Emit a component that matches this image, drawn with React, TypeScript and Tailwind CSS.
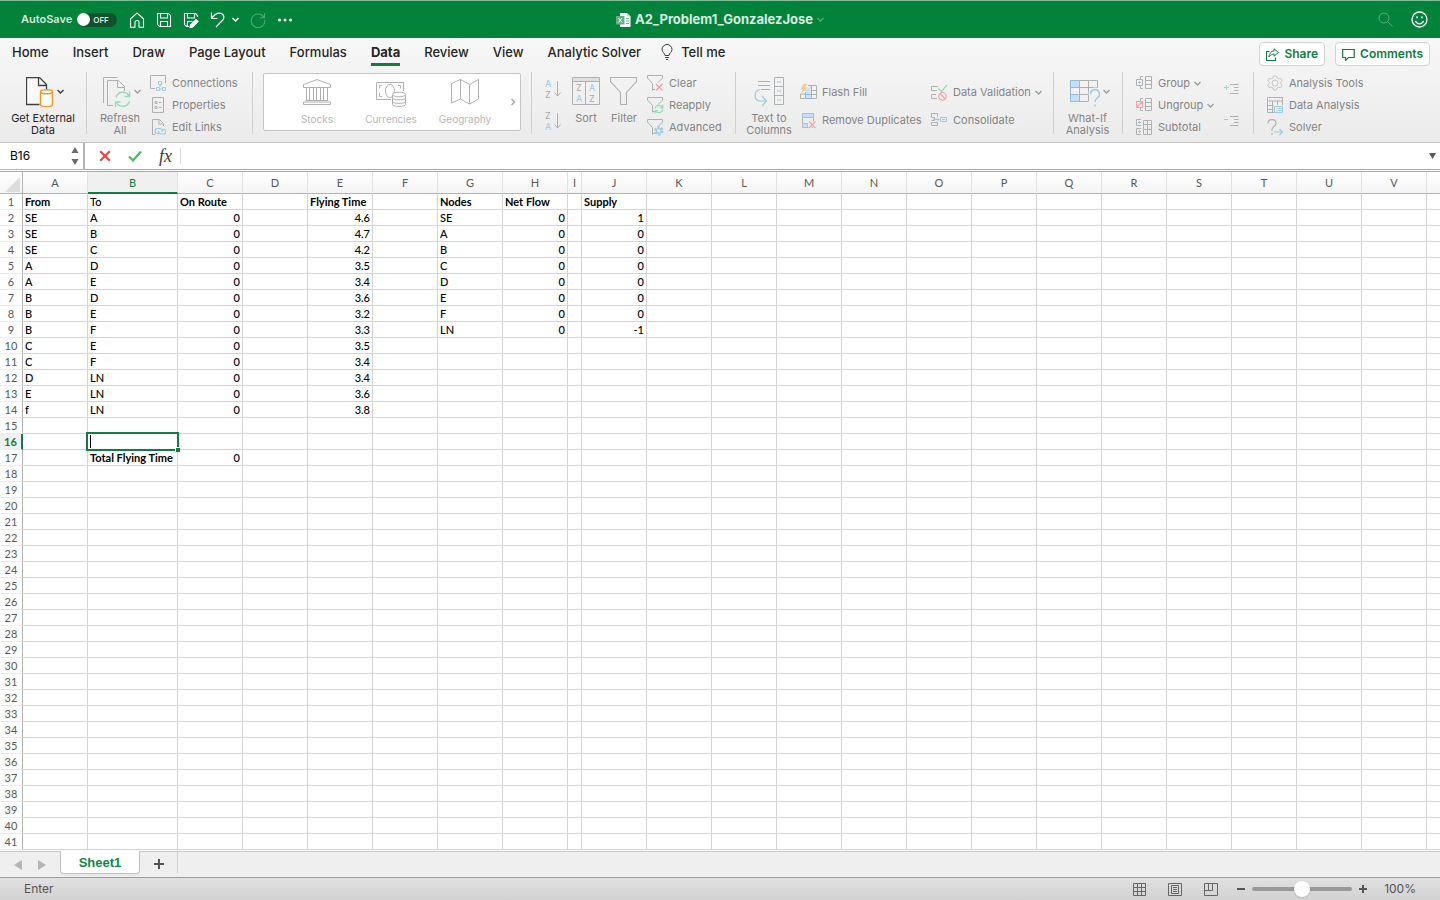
import { useState, type ReactNode } from "react";
import { clsx } from "clsx";

const GRAY = "#b0b0b0";
const BLUE = "#98cbe8";
const GREEN = "#96dcb4";
const RED = "#f7a0a0";

type IconProps = {
  w: number;
  h: number;
  color?: string;
  children: ReactNode;
};

function Icon({ w, h, color = GRAY, children }: IconProps) {
  return (
    <svg
      width={w}
      height={h}
      viewBox={`0 0 ${w} ${h}`}
      fill="none"
      stroke={color}
      className="shrink-0"
      aria-hidden="true"
    >
      {children}
    </svg>
  );
}

function Chevron({ color = "#a0a0a0" }: { color?: string }) {
  return (
    <Icon w={7} h={5} color={color}>
      <path d="M.500 1l3 3 3-3" strokeWidth="1.500" />
    </Icon>
  );
}

/* ---------- Title bar icons ---------- */

const HomeIcon = () => (
  <Icon w={16} h={16} color="#fff">
    <path d="M1.500 6.800L8 1l6.500 5.800V15.300H10V10.500a2 2 0 0 0-4 0v4.800H1.500z" strokeWidth="1.100" />
  </Icon>
);

const SaveIcon = () => (
  <Icon w={16} h={16} color="#fff">
    <path d="M1.500 1.500h11l2 2v11h-11l-2-2z M4.500 1.500v4.500h7V1.500 M4.500 14.500V9.500h7v5" strokeWidth="1.100" />
  </Icon>
);

const SaveAsIcon = () => (
  <Icon w={16} h={16} color="#fff">
    <path d="M14.500 5V3.500l-2-2h-11v11l2 2H6 M4.500 1.500v4.500h7V1.500 M4.500 14.500V9.500h5" strokeWidth="1.100" />
    <path d="M7.500 12.800l5.500-5.500 2.300 2.300-5.500 5.500-3 .700z" fill="#fff" />
  </Icon>
);

const UndoIcon = () => (
  <Icon w={15} h={17} color="#fff">
    <path d="M1.500 1.500v6h6 M1.800 7.200C4 4 6.500 2.200 9.500 2.200c4 0 5.500 4 3.300 6.800L6 16" strokeWidth="1.200" />
  </Icon>
);

const RedoIcon = () => (
  <Icon w={16} h={16} color="#4fa974">
    <path d="M14 5.500A6.800 6.800 0 1 0 14.800 8 M14.500 1v4.700H10" strokeWidth="1.100" />
  </Icon>
);

const ExcelFileIcon = () => (
  <Icon w={15} h={16} color="none">
    <path d="M4 1h7l3.500 3.500V15H4z" fill="#fff" />
    <path d="M11 1v3.500h3.500" fill="#b9dcc8" />
    <path d="M10 6.500h3M10 9h3M10 11.500h3" stroke="#5cb488" />
    <rect y="4" width="8.500" height="8.500" fill="#5fae84" />
    <path d="M2.500 6l3.500 4.500M6 6l-3.500 4.500" stroke="#fff" />
  </Icon>
);

/* ---------- Ribbon icons ---------- */

const GetDataIcon = () => (
  <Icon w={28} h={30} color="#404040">
    <path d="M13.500 27.500H.500V.500h13l7 7V12 M12.500.500v8h8" fill="#fafafa" strokeWidth="1.300" />
    <path d="M14.500 15v12.500c0 3 12 3 12 0V15" fill="#fafafa" stroke="#f7941d" strokeWidth="1.400" />
    <ellipse cx="20.500" cy="14.800" rx="6" ry="2" fill="#fafafa" stroke="#f7941d" strokeWidth="1.400" />
  </Icon>
);

const RefreshIcon = () => (
  <Icon w={28} h={30}>
    <path d="M.500 26V.500h14 M10 28.500H4.500v-25h11l6 6V14 M14.500 3.500v7h7" />
    <path d="M13 20.500a7 7 0 0 1 13-1.500 M26.500 14.500V19.500h-5 M26.500 24a7 7 0 0 1-13 1.500 M12.500 30v-5h5" stroke={GREEN} strokeWidth="1.400" />
  </Icon>
);

const ConnectionsIcon = () => (
  <Icon w={16} h={16}>
    <path d="M5 13.500H.500V.500h15V8" />
    <path d="M8.500 6.500h3v3h-3z M6.500 12.500h3v3h-3z M12.500 12.500h3v3h-3z M10 9.500v2.500 M9.500 14h3" stroke={BLUE} />
  </Icon>
);

const PropertiesIcon = () => (
  <Icon w={16} h={16}>
    <path d="M2.500.500h11v15h-11z M5 4.500h2v2H5z M5 9.500h2v2H5z M9 5.500h2.500M9 10.500h2.500" />
  </Icon>
);

const EditLinksIcon = () => (
  <Icon w={16} h={16}>
    <path d="M5 15.500H2.500V.500h7l4 4V7 M9 .500v4.500h4.500" />
    <path d="M9 14.500H7.500a2.500 2.500 0 0 1 0-5H10a2.500 2.500 0 0 1 2 3.500 M12.500 10.500h1a2 2 0 0 1 0 4.500H11a2 2 0 0 1-2-3" stroke={BLUE} strokeWidth="1.200" />
  </Icon>
);

const StocksIcon = () => (
  <Icon w={28} h={26}>
    <path d="M.500 8.500v-3L14 .600l13.500 4.900v3z M2.500 21.500h23 M.500 25.500v-2.500h27v2.500z M3.500 8.500v13M6.500 8.500v13M10.500 8.500v13M13.500 8.500v13M17.500 8.500v13M20.500 8.500v13M24.500 8.500v13" />
  </Icon>
);

const CurrenciesIcon = () => (
  <Icon w={31} h={28}>
    <path d="M15 20.500H.500V3.500h27V12 M6 6.500H3.500v3 M3.500 14v3.500H6 M22 6.500h2.500v3" />
    <ellipse cx="14" cy="12" rx="4.500" ry="6.500" />
    <path d="M16.500 16v9.500c0 2.500 13 2.500 13 0V16" fill="#fff" />
    <ellipse cx="23" cy="15.500" rx="6.500" ry="2.300" fill="#fff" />
    <path d="M16.500 19c0 2.500 13 2.500 13 0M16.500 22.500c0 2.500 13 2.500 13 0" />
  </Icon>
);

const GeographyIcon = () => (
  <Icon w={28} h={26}>
    <path d="M.500 4.500l9-4 9 5 9-5v19.500l-9 5-9-5-9 4z M9.500.500V20M18.500 5.500V25" />
  </Icon>
);

const SortIcon = ({ top, bottom }: { top: string; bottom: string }) => (
  <Icon w={18} h={20}>
    <g stroke="none" fontSize="9" fontFamily="Inter, sans-serif">
      <text x="1" y="8" fill={top === "A" ? BLUE : "#a8a8a8"}>{top}</text>
      <text x="1" y="19" fill={bottom === "A" ? BLUE : "#a8a8a8"}>{bottom}</text>
    </g>
    <path d="M13.500 2v15 M10.500 13.500l3 3.500 3-3.500" />
  </Icon>
);

const SortDialogIcon = () => (
  <Icon w={28} h={28}>
    <path d="M1 1h26v3H1z" fill="#dedede" stroke="none" />
    <path d="M.500.500h27v27H.500z M.500 4.500h27 M13.500 4.500v23" />
    <g stroke="none" fontSize="9" fontFamily="Inter, sans-serif">
      <text x="4" y="14" fill="#a8a8a8">Z</text>
      <text x="4" y="25" fill={BLUE}>A</text>
      <text x="17" y="14" fill={BLUE}>A</text>
      <text x="17" y="25" fill="#a8a8a8">Z</text>
    </g>
  </Icon>
);

const FilterIcon = () => (
  <Icon w={28} h={28}>
    <path d="M.500.500h26v4l-10 11v12h-6v-12l-10-11z" strokeWidth="1.100" />
  </Icon>
);

const SmallFilter = ({ children }: { children: ReactNode }) => (
  <Icon w={17} h={17}>
    <path d="M5.500 15.500V8.500l-5-5.500V.500h15V3l-4.500 4.500 M5.500 14.500h2.500" />
    {children}
  </Icon>
);

const TextToColumnsIcon = () => (
  <Icon w={30} h={30}>
    <path d="M4 4.500h12M4 8.500h12M7 12.500h9" />
    <path d="M20.500.500h9v27h-9z M20.500 9.500h9M20.500 18.500h9" />
    <path d="M6 12.500c-6 1-7 10.500 0 11.500h6 M8 19l4.500 5-4.500 5 M23 5h4M23 14h4M23 23h4" stroke={BLUE} strokeWidth="1.200" />
  </Icon>
);

const FlashFillIcon = () => (
  <Icon w={17} h={16}>
    <path d="M8 1.500h8.500v13H.500V10H5 M11.500 1.500v13 M5.500 6.500h11 M5.500 10.500h11 M5.500 10v4.500" />
    <path d="M6 6l5-4v12.500H6z" fill="#cde2f5" stroke="none" />
    <path d="M6 10.500h5.500M5.500 8v6.500h6v-13" stroke="#8fb8dd" />
    <path d="M3.500 0h3.500L5 3.500h3L.500 10 3 5.500H.500z" fill="#f7c98f" stroke="none" />
  </Icon>
);

const RemoveDuplicatesIcon = () => (
  <Icon w={17} h={17}>
    <path d="M2.500 1.500h11v14h-11z" />
    <path d="M2.500 1.500h11v4h-11zM2.500 11.500h5v4h-5z" fill="#c5dff6" stroke="#9cc2e4" />
    <path d="M9 9.500l6.500 6.500M15.500 9.500L9 16" stroke="#f0f0f0" strokeWidth="3" />
    <path d="M9 9.500l6.500 6.500M15.500 9.500L9 16" stroke={RED} strokeWidth="1.300" />
  </Icon>
);

const DataValidationIcon = () => (
  <Icon w={17} h={17}>
    <path d="M7 2.500H.500v4H6 M5 10.500H.500v4H6" />
    <path d="M7.500 4.500l3 3L16 1" stroke={GREEN} strokeWidth="1.300" />
    <circle cx="11.500" cy="12.300" r="3.800" stroke={RED} strokeWidth="1.200" />
    <path d="M9 9.700l5 5" stroke={RED} strokeWidth="1.200" />
  </Icon>
);

const ConsolidateIcon = () => (
  <Icon w={17} h={16}>
    <path d="M.500 5V1.500h6v3 M.500 10.500h6v3h-6z M.500 5.500h3v3h-3" />
    <path d="M2 7.500h6 M6 5.500l2 2-2 2 M9.500 5.500h6v4h-6z M11 7.500h3" stroke={BLUE} />
  </Icon>
);

const WhatIfIcon = () => (
  <Icon w={30} h={30}>
    <path d="M1 4h9v7H1zM1 18h9v7H1z" fill="#c5dff6" stroke="none" />
    <path d="M10 3.500h17.500V12 M10 10.500h17.500 M18.500 3.500v21 M.500 17.500H19 M.500 24.500H18" />
    <path d="M.500 3.500h9v21h-9zM.500 10.500h9M.500 17.500h9" stroke="#93b9dd" />
    <path d="M20.500 17.500a4.500 4.500 0 1 1 7 3.300c-1.500 1-2.500 1.700-2.500 4.200 M25 27.500v2" stroke="#f1f1f1" strokeWidth="4" />
    <path d="M20.500 17.500a4.500 4.500 0 1 1 7 3.300c-1.500 1-2.500 1.700-2.500 4.200 M25 27.500v2" stroke={BLUE} strokeWidth="1.500" />
  </Icon>
);

const GroupIcon = () => (
  <Icon w={17} h={16}>
    <path d="M9.500 1.500h6v12h-6zM9.500 5.500h6M9.500 9.500h6 M.500 4.500h6v6h-6z M4.500 4V1.500H7 M4.500 11v2.500H7" />
    <path d="M2 7.500h3M3.500 6v3" stroke={BLUE} />
  </Icon>
);

const UngroupIcon = () => (
  <Icon w={17} h={16}>
    <path d="M9.500 1.500h6v12h-6zM9.500 5.500h6M9.500 9.500h6 M4.500 4V1.500H7 M4.500 11v2.500H7" />
    <path d="M.500 4.500h6v6h-6z M1 10l5-5" stroke={RED} strokeWidth="1.200" />
  </Icon>
);

const SubtotalIcon = () => (
  <Icon w={17} h={16}>
    <path d="M7.500 1.500h8v14h-8zM7.500 5.500h8M7.500 10.500h8M11.500 1.500v14 M5 .500H.500v6H5 M5 9.500H.500v6H5" />
    <path d="M2 3.500h3M3.500 2v3M2 12.500h3M3.500 11v3" stroke={BLUE} />
  </Icon>
);

const DetailIcon = ({ plus }: { plus: boolean }) => (
  <Icon w={15} h={12}>
    <path d="M6 1.500h8.500M10 4.500h4.500M10 7.500h4.500M6 10.500h8.500" />
    {plus ? <path d="M0 4.500h5M2.500 2v5" stroke={GREEN} /> : <path d="M0 4.500h4" stroke={RED} />}
  </Icon>
);

const GearIcon = () => (
  <Icon w={16} h={16} color="#c4c4c4">
    <path d="M6.500 1h3l.500 2 1.700.900 2-.700 1.500 2.600-1.500 1.400v1.600l1.500 1.400-1.500 2.600-2-.700-1.700.900-.500 2h-3L6 13l-1.700-.900-2 .700L.800 10.200l1.500-1.400V7.200L.800 5.800l1.500-2.600 2 .700L6 3z" />
    <circle cx="8" cy="8" r="3" />
  </Icon>
);

const DataAnalysisIcon = () => (
  <Icon w={17} h={16}>
    <path d="M7 15.500H.500v-15h15V8 M.500 4h15M.500 8.500h6M.500 12.500h6 M5.500 4v11.500 M10.500 4v4" />
    <path d="M7.500 9.500h8v6h-8z M9.500 11.500h1M11.500 11.500h3M9.500 13.500h1M11.500 13.500h3" stroke={BLUE} />
  </Icon>
);

const SolverIcon = () => (
  <Icon w={17} h={17}>
    <path d="M.800 4.500C1 2 3 .700 5 .700s4 1.300 4 3.800c0 3-4 3-4 6V12 M5 14v2" strokeWidth="1.200" />
    <path d="M7 13h8.500 M12.500 10l3 3-3 3" stroke={BLUE} strokeWidth="1.200" />
  </Icon>
);

/* ---------- Ribbon building blocks ---------- */

function RibbonGroup({ className, children }: { className?: string; children: ReactNode }) {
  return (
    <div className={clsx("flex h-[62px] shrink-0 border-r border-[#cfcfcf]", className)}>
      {children}
    </div>
  );
}

type BigButtonProps = {
  icon: ReactNode;
  lines: string[];
  width: string;
  chevron?: string;
  dark?: boolean;
};

function BigButton({ icon, lines, width, chevron, dark }: BigButtonProps) {
  return (
    <button
      className={clsx(
        "flex shrink-0 flex-col items-center pt-[5px] text-[11px] leading-3",
        width,
        dark ? "text-[#262626]" : "text-[#858585]"
      )}
    >
      <span className={clsx("mb-[5px] flex h-[30px] items-start gap-[3px]", chevron && "pl-1")}>
        {icon}
        {chevron && (
          <span className="flex h-7 items-center">
            <Chevron color={chevron} />
          </span>
        )}
      </span>
      {lines.map((line) => (
        <span key={line} className="whitespace-nowrap">
          {line}
        </span>
      ))}
    </button>
  );
}

type SmallButtonProps = { icon: ReactNode; label: string; chevron?: boolean; tall?: boolean };

function SmallButton({ icon, label, chevron, tall }: SmallButtonProps) {
  return (
    <button
      className={clsx(
        "flex items-center whitespace-nowrap text-[11px] text-[#858585]",
        tall ? "h-7" : "h-[22px]"
      )}
    >
      <span className="w-[22px]">{icon}</span>
      {label}
      {chevron && (
        <span className="ml-1">
          <Chevron />
        </span>
      )}
    </button>
  );
}

function Ribbon() {
  return (
    <div className="flex h-[70px] overflow-hidden">
      <RibbonGroup className="w-[87px]">
        <BigButton dark chevron="#404040" width="w-[86px]" icon={<GetDataIcon />} lines={["Get External", "Data"]} />
      </RibbonGroup>

      <RibbonGroup className="w-[166px] pl-[3px]">
        <BigButton chevron="#a0a0a0" width="w-[60px]" icon={<RefreshIcon />} lines={["Refresh", "All"]} />
        <div>
          <SmallButton icon={<ConnectionsIcon />} label="Connections" />
          <SmallButton icon={<PropertiesIcon />} label="Properties" />
          <SmallButton icon={<EditLinksIcon />} label="Edit Links" />
        </div>
      </RibbonGroup>

      <RibbonGroup className="w-[279px] pl-[10px]">
        <div className="mt-px flex h-[58px] w-[258px] rounded-xs border border-[#c6c6c6] bg-white pl-4 text-[#b8b8b8]">
          {[
            { label: "Stocks", icon: <StocksIcon /> },
            { label: "Currencies", icon: <CurrenciesIcon /> },
            { label: "Geography", icon: <GeographyIcon /> },
          ].map((item) => (
            <button key={item.label} className="flex w-[74px] flex-col items-center pt-[5px] text-[10px] leading-3">
              <span className="mb-2 h-[26px]">{item.icon}</span>
              {item.label}
            </button>
          ))}
          <button aria-label="More data types" className="pl-2">
            <Icon w={6} h={8} color="#a0a0a0">
              <path d="M1.500 1l3 3-3 3" strokeWidth="1.300" />
            </Icon>
          </button>
        </div>
      </RibbonGroup>

      <RibbonGroup className="w-[204px] pl-3">
        <div className="flex w-6 flex-col gap-3 pt-[7px]">
          <button aria-label="Sort A to Z"><SortIcon top="A" bottom="Z" /></button>
          <button aria-label="Sort Z to A"><SortIcon top="Z" bottom="A" /></button>
        </div>
        <BigButton width="w-9" icon={<SortDialogIcon />} lines={["Sort"]} />
        <BigButton width="w-10" icon={<FilterIcon />} lines={["Filter"]} />
        <div className="pl-[3px]">
          <SmallButton
            label="Clear"
            icon={<SmallFilter><path d="M9 9l6.500 6.500M15.500 9L9 15.500" stroke={RED} strokeWidth="1.300" /></SmallFilter>}
          />
          <SmallButton
            label="Reapply"
            icon={
              <SmallFilter>
                <path d="M8 11.500a4 4 0 0 1 7.500-1 M15.800 7.500v3.500h-3 M15.800 12.500a4 4 0 0 1-7.500 1 M8 16.500v-3h3" stroke={GREEN} strokeWidth="1.200" />
              </SmallFilter>
            }
          />
          <SmallButton
            label="Advanced"
            icon={
              <SmallFilter>
                <circle cx="11.800" cy="11.800" r="3.700" stroke={BLUE} strokeWidth="2" strokeDasharray="2.300 1.570" />
                <circle cx="11.800" cy="11.800" r="2.300" stroke={BLUE} strokeWidth="1.200" />
              </SmallFilter>
            }
          />
        </div>
      </RibbonGroup>

      <RibbonGroup className="w-[318px] pl-[2px]">
        <BigButton width="w-[62px]" icon={<TextToColumnsIcon />} lines={["Text to", "Columns"]} />
        <div className="w-[131px] pt-[6px]">
          <SmallButton tall icon={<FlashFillIcon />} label="Flash Fill" />
          <SmallButton tall icon={<RemoveDuplicatesIcon />} label="Remove Duplicates" />
        </div>
        <div className="pt-[6px]">
          <SmallButton tall chevron icon={<DataValidationIcon />} label="Data Validation" />
          <SmallButton tall icon={<ConsolidateIcon />} label="Consolidate" />
        </div>
      </RibbonGroup>

      <RibbonGroup className="w-[69px]">
        <BigButton chevron="#a0a0a0" width="w-[67px]" icon={<WhatIfIcon />} lines={["What-If", "Analysis"]} />
      </RibbonGroup>

      <RibbonGroup className="w-[131px] pl-[13px]">
        <div className="w-[88px]">
          <SmallButton chevron icon={<GroupIcon />} label="Group" />
          <SmallButton chevron icon={<UngroupIcon />} label="Ungroup" />
          <SmallButton icon={<SubtotalIcon />} label="Subtotal" />
        </div>
        <div className="flex flex-col gap-5 pt-[11px]">
          <button aria-label="Show Detail"><DetailIcon plus /></button>
          <button aria-label="Hide Detail"><DetailIcon plus={false} /></button>
        </div>
      </RibbonGroup>

      <div className="pl-[13px]">
        <SmallButton icon={<GearIcon />} label="Analysis Tools" />
        <SmallButton icon={<DataAnalysisIcon />} label="Data Analysis" />
        <SmallButton icon={<SolverIcon />} label="Solver" />
      </div>
    </div>
  );
}

/* ---------- Header ---------- */

function TitleBar() {
  const [autoSave, setAutoSave] = useState(false);

  return (
    <header className="grid h-[38px] shrink-0 grid-cols-[1fr_auto_1fr] items-center border-t border-[#7fbf9a] bg-[#03823b] text-white">
      <div className="flex items-center pl-[21px]">
        <span className="text-[11px] font-semibold text-[#d3ebdc]">AutoSave</span>
        <button
          role="switch"
          aria-checked={autoSave}
          aria-label="AutoSave"
          onClick={() => setAutoSave(!autoSave)}
          className="ml-[5px] flex h-[14px] w-10 items-center rounded-full bg-[#10522e] text-[8px] font-semibold text-[#d8e8de]"
        >
          <span className="mr-[3px] h-[13px] w-[13px] rounded-full bg-white" />
          {autoSave ? "ON" : "OFF"}
        </button>
        <div className="ml-3 flex items-center gap-[11px]">
          <button aria-label="Home"><HomeIcon /></button>
          <button aria-label="Save"><SaveIcon /></button>
          <button aria-label="Save As"><SaveAsIcon /></button>
          <button aria-label="Undo" className="flex items-center gap-[7px]">
            <UndoIcon />
            <Chevron color="#fff" />
          </button>
          <button aria-label="Redo"><RedoIcon /></button>
          <button aria-label="More commands">
            <Icon w={16} h={4} color="none">
              <circle cx="2.500" cy="2" r="1.500" fill="#fff" />
              <circle cx="8" cy="2" r="1.500" fill="#fff" />
              <circle cx="13.500" cy="2" r="1.500" fill="#fff" />
            </Icon>
          </button>
        </div>
      </div>
      <h1 className="flex items-center text-[13px] font-bold text-[#d9eee1]">
        <ExcelFileIcon />
        <span className="ml-1 mr-1">A2_Problem1_GonzalezJose</span>
        <Chevron color="#4fa974" />
      </h1>
      <div className="flex items-center justify-end gap-[18px] pr-3">
        <button aria-label="Search">
          <Icon w={15} h={15} color="#58ad7c">
            <circle cx="6" cy="6" r="5" />
            <path d="M9.500 9.500L14.500 14.500" />
          </Icon>
        </button>
        <button aria-label="Feedback">
          <Icon w={17} h={17} color="#fff">
            <circle cx="8.500" cy="8.500" r="7.500" strokeWidth="1.300" />
            <path d="M4.500 10c1.500 3.700 6.500 3.700 8 0" strokeWidth="1.200" />
            <path d="M5.200 5.500h1.800v1.800H5.200zM10 5.500h1.800v1.800H10z" fill="#fff" stroke="none" />
          </Icon>
        </button>
      </div>
    </header>
  );
}

const TABS = ["Home", "Insert", "Draw", "Page Layout", "Formulas", "Data", "Review", "View", "Analytic Solver"];

function TabBar() {
  const [active, setActive] = useState("Data");

  return (
    <div className="flex h-[34px] items-start justify-between pl-3 pr-[10px] text-[13px] text-[#262626]">
      <nav className="flex gap-6">
        {TABS.map((tab) => (
          <button
            key={tab}
            onClick={() => setActive(tab)}
            className={clsx(
              "whitespace-nowrap border-b-[3px] pt-[3px] leading-[22px]",
              tab === active ? "border-[#107c41] font-bold" : "border-transparent font-medium"
            )}
          >
            {tab}
          </button>
        ))}
        <button className="-ml-1 flex items-center gap-2 border-b-[3px] border-transparent pt-[3px] font-medium leading-[22px]">
          <Icon w={12} h={16} color="#404040">
            <path d="M4 11.500C4 9 1 8.500 1 5.500a5 5 0 0 1 10 0c0 3-3 3.500-3 6z M4 13.500h4 M5 15.500h2" />
          </Icon>
          Tell me
        </button>
      </nav>
      <div className="flex gap-[10px] pt-1 text-[12px] font-semibold text-[#107c41]">
        <button className="flex h-6 items-center gap-[5px] rounded-sm border border-[#d4d4d4] bg-white px-[6px]">
          <Icon w={13} h={13} color="#107c41">
            <path d="M3.500 3.500h-3v9h9v-3" strokeWidth="1.100" />
            <path d="M8 .800l4.500 3.700L8 8.200V6C6 6 4.500 7 3 9c.500-3.500 2-6 5-6z" />
          </Icon>
          Share
        </button>
        <button className="flex h-6 items-center gap-[5px] rounded-sm border border-[#d4d4d4] bg-white px-[6px]">
          <Icon w={13} h={13} color="#107c41">
            <path d="M.700 1.500h11.500v8H6.500l-3 3v-3H.700z" strokeWidth="1.200" />
          </Icon>
          Comments
        </button>
      </div>
    </div>
  );
}

function FormulaBar() {
  return (
    <div className="flex h-[29px] shrink-0 items-stretch border-t border-[#c4c4c4] bg-white pb-px">
      <div className="flex w-[85px] items-center border-b border-r-2 border-[#b4b4b4] pr-1">
        <input
          aria-label="Name box"
          defaultValue="B16"
          className="w-0 flex-1 bg-transparent pl-[10px] text-[12px] text-black outline-none"
        />
        <button aria-label="Names">
          <Icon w={8} h={18} color="none">
            <path d="M4 0l3.500 6h-7zM4 18l3.500-6h-7z" fill="#6b6b6b" />
          </Icon>
        </button>
      </div>
      <div className="flex flex-1 items-center border-b border-[#a6a6a6]">
        <button aria-label="Cancel" className="ml-[14px]">
          <Icon w={12} h={12} color="#ef4444">
            <path d="M1.200 1.200l9.600 9.600M10.800 1.200L1.200 10.800" strokeWidth="2.200" />
          </Icon>
        </button>
        <button aria-label="Enter" className="ml-[17px]">
          <Icon w={14} h={12} color="#4bbf57">
            <path d="M1 6.500l4 4L13 1.500" strokeWidth="2.200" />
          </Icon>
        </button>
        <button
          aria-label="Insert function"
          className="ml-[17px] font-['Liberation_Serif',serif] text-[18px] italic leading-5 text-[#404040]"
        >
          fx
        </button>
        <input
          aria-label="Formula"
          className="ml-2 h-4 flex-1 border-l border-[#d8d8d8] px-2 text-[12px] outline-none"
        />
        <button aria-label="Expand formula bar" className="mr-1">
          <Icon w={7} h={6} color="none">
            <path d="M0 0h7L3.500 6z" fill="#595959" />
          </Icon>
        </button>
      </div>
    </div>
  );
}

/* ---------- Worksheet ---------- */

const COLUMNS = "ABCDEFGHIJKLMNOPQRSTUV".split("");
const ROW_COUNT = 41;
const SELECTED = { col: "B", row: 16 };

const ROUTES: [string, string, string][] = [
  ["SE", "A", "4.6"],
  ["SE", "B", "4.7"],
  ["SE", "C", "4.2"],
  ["A", "D", "3.5"],
  ["A", "E", "3.4"],
  ["B", "D", "3.6"],
  ["B", "E", "3.2"],
  ["B", "F", "3.3"],
  ["C", "E", "3.5"],
  ["C", "F", "3.4"],
  ["D", "LN", "3.4"],
  ["E", "LN", "3.6"],
  ["f", "LN", "3.8"],
];

const NODES: [string, string][] = [
  ["SE", "1"],
  ["A", "0"],
  ["B", "0"],
  ["C", "0"],
  ["D", "0"],
  ["E", "0"],
  ["F", "0"],
  ["LN", "-1"],
];

const cells: Record<string, string> = {
  A1: "From",
  B1: "To",
  C1: "On Route",
  E1: "Flying Time",
  G1: "Nodes",
  H1: "Net Flow",
  J1: "Supply",
  B17: "Total Flying Time",
  C17: "0",
};

ROUTES.forEach(([from, to, time], i) => {
  const row = i + 2;
  cells[`A${row}`] = from;
  cells[`B${row}`] = to;
  cells[`C${row}`] = "0";
  cells[`E${row}`] = time;
});

NODES.forEach(([node, supply], i) => {
  const row = i + 2;
  cells[`G${row}`] = node;
  cells[`H${row}`] = "0";
  cells[`J${row}`] = supply;
});

const BOLD = ["A1", "C1", "E1", "G1", "H1", "J1", "B17"];

function columnWidth(col: string) {
  if (col === "B") return "w-[90px]";
  if (col === "I") return "w-[14px]";
  return "w-[65px]";
}

function Cell({ id, selected }: { id: string; selected: boolean }) {
  const value = cells[id] ?? "";
  const numeric = value !== "" && !isNaN(Number(value));

  return (
    <td
      className={clsx(
        "relative h-4 whitespace-nowrap border-b border-r border-[#d4d4d4] p-0 px-[2px]",
        numeric && "text-right",
        BOLD.includes(id) ? "font-bold" : "font-medium"
      )}
    >
      {value}
      {selected && (
        <div className="absolute -inset-0.5 z-10 border-2 border-[#107c41] bg-white">
          <input aria-label={id} className="block h-full w-full bg-transparent outline-none" />
          <span className="absolute inset-y-px left-0.5 w-px bg-black" />
          <span className="absolute -bottom-[3px] -right-[3px] h-[5px] w-[5px] border-l border-t border-white bg-[#107c41]" />
        </div>
      )}
    </td>
  );
}

function Sheet() {
  return (
    <main className="min-h-0 flex-1 overflow-hidden border-t border-[#a6a6a6] bg-white">
      <table className="w-full table-fixed border-separate border-spacing-0 font-[Lato,sans-serif] text-[11px] leading-[15px] text-black">
        <colgroup>
          <col className="w-[23px]" />
          {COLUMNS.map((col) => (
            <col key={col} className={columnWidth(col)} />
          ))}
          <col />
        </colgroup>
        <thead>
          <tr className="bg-linear-to-b from-white to-[#f4f4f4] text-[#595959]">
            <th className="h-[22px] border-b border-r border-[#b4b4b4] p-0">
              <Icon w={20} h={18} color="none">
                <path d="M20 3v15H5z" fill="#dcdcdc" />
              </Icon>
            </th>
            {COLUMNS.map((col) => (
              <th
                key={col}
                scope="col"
                className={clsx(
                  "border-r border-r-[#e2e2e2] p-0 font-normal",
                  col === SELECTED.col
                    ? "border-b-2 border-b-[#107c41] bg-[#f0f0f0] font-bold text-[#107c41]"
                    : "border-b border-b-[#b4b4b4]"
                )}
              >
                {col}
              </th>
            ))}
            <th className="border-b border-[#b4b4b4] p-0" />
          </tr>
        </thead>
        <tbody>
          {Array.from({ length: ROW_COUNT }, (_, i) => i + 1).map((row) => (
            <tr key={row}>
              <th
                scope="row"
                className={clsx(
                  "h-4 border-b border-b-[#ececec] p-0 text-center",
                  row === SELECTED.row
                    ? "border-r-2 border-r-[#107c41] bg-[#f0f0f0] font-bold text-[#107c41]"
                    : "border-r border-r-[#b4b4b4] font-normal text-[#595959]"
                )}
              >
                {row}
              </th>
              {COLUMNS.map((col) => (
                <Cell key={col} id={`${col}${row}`} selected={col === SELECTED.col && row === SELECTED.row} />
              ))}
              <td className="border-b border-[#d4d4d4] p-0" />
            </tr>
          ))}
        </tbody>
      </table>
    </main>
  );
}

/* ---------- Footer ---------- */

function SheetTabs() {
  return (
    <div className="flex h-[26px] shrink-0 items-start border-t border-[#c8c8c8] bg-[#efefef]">
      <button aria-label="Previous sheet" className="ml-[14px] mt-2">
        <Icon w={8} h={10} color="none"><path d="M8 0v10L0 5z" fill="#b4b4b4" /></Icon>
      </button>
      <button aria-label="Next sheet" className="ml-4 mt-2">
        <Icon w={8} h={10} color="none"><path d="M0 0v10l8-5z" fill="#b4b4b4" /></Icon>
      </button>
      <button className="-mt-px ml-[14px] h-[23px] w-20 rounded-b-sm border border-t-0 border-[#c4c4c4] bg-white pt-px font-['Liberation_Sans',sans-serif] text-[13px] font-bold leading-[22px] text-[#0a8a48] shadow-xs">
        Sheet1
      </button>
      <div className="flex h-[21px] w-[38px] items-center justify-center border-r border-[#cfcfcf] pt-[3px]">
        <button aria-label="Add sheet">
          <Icon w={10} h={10} color="#555">
            <path d="M5 0v10M0 5h10" strokeWidth="2" />
          </Icon>
        </button>
      </div>
    </div>
  );
}

function StatusBar() {
  const [zoom, setZoom] = useState(100);

  return (
    <footer className="flex h-[23px] shrink-0 items-center justify-between border-t border-[#9c9c9c] bg-linear-to-b from-[#e0e0e0] to-[#d2d2d2] pl-6 pr-6 text-[12px] text-[#555]">
      <span>Enter</span>
      <div className="flex items-center">
        <button aria-label="Normal view">
          <Icon w={13} h={13} color="#666">
            <path d="M.500.500h12v12H.500zM4.500.500v12M8.500.500v12M.500 4.500h12M.500 8.500h12" />
          </Icon>
        </button>
        <button aria-label="Page layout view" className="ml-[22px]">
          <Icon w={14} h={13} color="#666">
            <path d="M.500.500h13v12H.500zM3.500 2.500h7v8h-7zM5 4.500h4M5 6.500h4M5 8.500h4" />
          </Icon>
        </button>
        <button aria-label="Page break view" className="ml-[22px]">
          <Icon w={14} h={13} color="#666">
            <path d="M.500.500h13v12H.500zM4.500.500v7M8.500.500v7M.500 7.500h8" />
          </Icon>
        </button>
        <button aria-label="Zoom out" className="ml-[19px]">
          <Icon w={8} h={8} color="#555"><path d="M0 4h8" strokeWidth="2" /></Icon>
        </button>
        <input
          type="range"
          aria-label="Zoom"
          min={0}
          max={200}
          value={zoom}
          onChange={(e) => setZoom(Number(e.target.value))}
          className="mx-[7px] h-1 w-[100px] appearance-none rounded-full bg-[#999] [&::-webkit-slider-thumb]:h-4 [&::-webkit-slider-thumb]:w-4 [&::-webkit-slider-thumb]:appearance-none [&::-webkit-slider-thumb]:rounded-full [&::-webkit-slider-thumb]:bg-white [&::-webkit-slider-thumb]:shadow"
        />
        <button aria-label="Zoom in">
          <Icon w={8} h={8} color="#555"><path d="M0 4h8M4 0v8" strokeWidth="2" /></Icon>
        </button>
        <span className="ml-[17px] w-8 text-right">{zoom}%</span>
      </div>
    </footer>
  );
}

export default function App() {
  return (
    <div className="flex h-screen flex-col overflow-hidden bg-white font-[Inter,sans-serif]">
      <TitleBar />
      <div className="shrink-0 bg-linear-to-b from-[#f7f7f7] to-[#ebebeb]">
        <TabBar />
        <Ribbon />
      </div>
      <FormulaBar />
      <Sheet />
      <SheetTabs />
      <StatusBar />
    </div>
  );
}
